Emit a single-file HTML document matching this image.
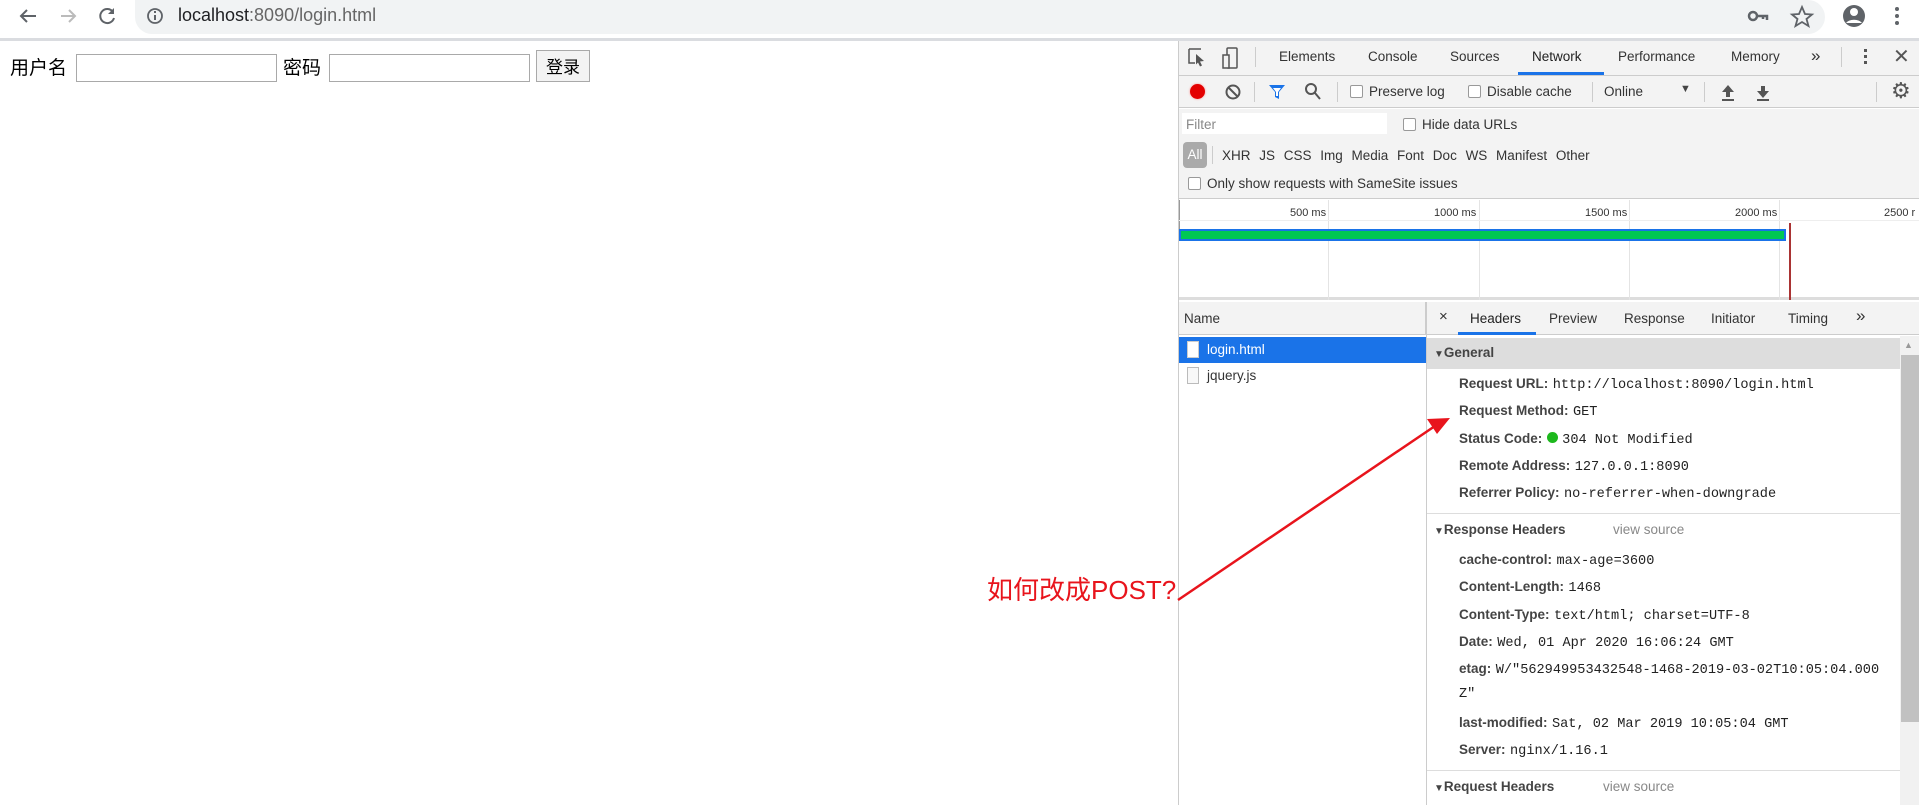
<!DOCTYPE html>
<html><head><meta charset="utf-8"><style>
*{margin:0;padding:0;box-sizing:border-box}
body{width:1919px;height:805px;overflow:hidden;background:#fff;font-family:"Liberation Sans","Noto Sans CJK SC",sans-serif;position:relative;color:#333}
.a{position:absolute;white-space:nowrap}
.dt{font-size:13.5px;color:#333}
.mono{font-family:"Liberation Mono",monospace;font-size:13.6px;color:#222}
.lab{font-weight:bold;color:#444;font-size:13.5px}
.cb{display:inline-block;width:13px;height:13px;border:1px solid #999;border-radius:2px;background:#fff;vertical-align:-2px;margin-right:6px}
</style></head><body>
<div class="a" style="left:0;top:0;width:1919px;height:38px;background:#fff"></div>
<div class="a" style="left:135px;top:0;width:1690px;height:34px;background:#f1f3f4;border-radius:0 17px 17px 17px"></div>
<div class="a" style="left:0;top:38px;width:1919px;height:3px;background:#dadce0"></div>
<svg class="a" style="left:0;top:0" width="400" height="38">
<g fill="none" stroke-width="2">
<path d="M36 16H21M27 10l-6 6 6 6" stroke="#5f6368"/>
<path d="M61 16h14M69 10l6 6-6 6" stroke="#bbb"/>
<path d="M113 12a7 7 0 1 0 1 6" stroke="#5f6368"/>
</g>
<path d="M114 8v6h-6z" fill="#5f6368"/>
<circle cx="155" cy="16" r="7" fill="none" stroke="#5f6368" stroke-width="1.8"/>
<rect x="154" y="15" width="2" height="5" fill="#5f6368"/><rect x="154" y="11" width="2" height="2" fill="#5f6368"/>
</svg>
<div class="a" style="left:178px;top:5px;font-size:18px;color:#202124">localhost<span style="color:#666">:8090/login.html</span></div>
<svg class="a" style="left:1740px;top:4px" width="179" height="28">
<circle cx="13" cy="12" r="4" fill="none" stroke="#5f6368" stroke-width="2.5"/><path d="M17 12h10v4M23 12v3" stroke="#5f6368" stroke-width="2.5" fill="none"/>
<path d="M62 3l3 7 7 .5-5.5 4.5 2 7-6.5-4-6.5 4 2-7-5.5-4.5 7-.5z" fill="none" stroke="#5f6368" stroke-width="1.8"/>
<circle cx="114" cy="12" r="11" fill="#5f6368"/><circle cx="114" cy="8" r="4" fill="#fff"/><path d="M106 19a9 6 0 0 1 16 0" fill="#fff"/>
<circle cx="157" cy="5" r="2" fill="#5f6368"/><circle cx="157" cy="12" r="2" fill="#5f6368"/><circle cx="157" cy="19" r="2" fill="#5f6368"/>
</svg>
<div class="a" style="left:10px;top:54px;font-size:19px;color:#000;font-family:'Noto Sans CJK SC',sans-serif;line-height:26px">用户名</div>
<div class="a" style="left:76px;top:54px;width:201px;height:28px;border:1px solid #a9a9a9"></div>
<div class="a" style="left:283px;top:54px;font-size:19px;color:#000;font-family:'Noto Sans CJK SC',sans-serif;line-height:26px">密码</div>
<div class="a" style="left:329px;top:54px;width:201px;height:28px;border:1px solid #a9a9a9"></div>
<div class="a" style="left:536px;top:50px;width:54px;height:32px;border:1px solid #a9a9a9;background:#f3f3f3;font-size:17px;color:#000;text-align:center;line-height:30px;font-family:'Noto Sans CJK SC',sans-serif">登录</div>
<!-- devtools -->
<div class="a" style="left:1178px;top:41px;width:741px;height:764px;background:#fff;border-left:1px solid #ccc"></div>
<div class="a" style="left:1179px;top:41px;width:740px;height:35px;background:#f3f3f3;border-bottom:1px solid #ccc"></div>
<svg class="a" style="left:1185px;top:46px" width="40" height="26">
<path d="M4 3h12M4 3v14h6" stroke="#555" stroke-width="1.5" fill="none"/><path d="M11 8l8 7-4 .5 2 4-2 1-2-4-2 2z" fill="#555"/>
</svg>
<svg class="a" style="left:1220px;top:46px" width="24" height="26"><rect x="7" y="2" width="10" height="20" rx="1" fill="none" stroke="#555" stroke-width="1.5"/><rect x="3" y="9" width="6" height="13" fill="#f3f3f3" stroke="#555" stroke-width="1.5"/></svg>
<div class="a" style="left:1255px;top:47px;width:1px;height:20px;background:#ccc"></div>
<div class="a dt" style="left:1279px;top:49px">Elements</div>
<div class="a dt" style="left:1368px;top:49px">Console</div>
<div class="a dt" style="left:1450px;top:49px">Sources</div>
<div class="a dt" style="left:1532px;top:49px;color:#222">Network</div>
<div class="a" style="left:1518px;top:72px;width:86px;height:3px;background:#1a73e8"></div>
<div class="a dt" style="left:1618px;top:49px">Performance</div>
<div class="a dt" style="left:1731px;top:49px">Memory</div>
<div class="a dt" style="left:1811px;top:46px;font-size:17px">»</div>
<div class="a" style="left:1841px;top:47px;width:1px;height:20px;background:#ccc"></div>
<div class="a" style="left:1864px;top:49px;width:3px;height:3px;background:#555;box-shadow:0 6px #555,0 12px #555"></div>
<div class="a" style="left:1893px;top:44px;font-size:20px;color:#555">✕</div>
<div class="a" style="left:1179px;top:76px;width:740px;height:32px;background:#f3f3f3;border-bottom:1px solid #ccc"></div>
<div class="a" style="left:1190px;top:84px;width:15px;height:15px;border-radius:50%;background:#e30000;box-shadow:0 0 2px #f88"></div>
<svg class="a" style="left:1224px;top:83px" width="18" height="18"><circle cx="9" cy="9" r="6.5" fill="none" stroke="#555" stroke-width="2"/><line x1="4.5" y1="4.5" x2="13.5" y2="13.5" stroke="#555" stroke-width="2"/></svg>
<div class="a" style="left:1254px;top:82px;width:1px;height:20px;background:#ccc"></div>
<svg class="a" style="left:1268px;top:83px" width="18" height="18"><path d="M1 2h16l-6 7v7l-4-2V9z" fill="#1a73e8"/><path d="M5 5h8l-3 4v4h-2V9z" fill="#fff"/></svg>
<svg class="a" style="left:1304px;top:82px" width="18" height="20"><circle cx="7" cy="7" r="5" fill="none" stroke="#555" stroke-width="2"/><line x1="11" y1="11" x2="16" y2="17" stroke="#555" stroke-width="2"/></svg>
<div class="a" style="left:1337px;top:82px;width:1px;height:20px;background:#ccc"></div>
<div class="a dt" style="left:1350px;top:84px"><span class="cb"></span>Preserve log</div>
<div class="a dt" style="left:1468px;top:84px"><span class="cb"></span>Disable cache</div>
<div class="a" style="left:1592px;top:82px;width:1px;height:20px;background:#ccc"></div>
<div class="a dt" style="left:1604px;top:84px">Online</div>
<div class="a" style="left:1680px;top:83px;font-size:11px;color:#444">▼</div>
<div class="a" style="left:1704px;top:82px;width:1px;height:20px;background:#ccc"></div>
<svg class="a" style="left:1720px;top:82px" width="50" height="20"><path d="M8 3l6 7h-4v5H6v-5H2z M2 17h12v2H2z" fill="#555"/><path d="M43 16l6-7h-4V4h-4v5h-4z M37 17h12v2H37z" fill="#555"/></svg>
<div class="a" style="left:1876px;top:82px;width:1px;height:20px;background:#ccc"></div>
<div class="a" style="left:1891px;top:78px;font-size:22px;color:#555">⚙</div>
<div class="a" style="left:1179px;top:109px;width:740px;height:90px;background:#f3f3f3;border-bottom:1px solid #ccc"></div>
<div class="a" style="left:1182px;top:113px;width:205px;height:21px;background:#fff"></div>
<div class="a dt" style="left:1186px;top:117px;color:#888">Filter</div>
<div class="a dt" style="left:1403px;top:117px"><span class="cb"></span>Hide data URLs</div>
<div class="a" style="left:1183px;top:142px;width:24px;height:26px;border-radius:4px;background:#aaa;color:#fff;font-size:13.5px;text-align:center;line-height:26px">All</div>
<div class="a" style="left:1212px;top:146px;width:1px;height:18px;background:#ccc"></div>
<div class="a dt" style="left:1222px;top:148px;word-spacing:5px">XHR JS CSS Img Media Font Doc WS Manifest Other</div>
<div class="a dt" style="left:1188px;top:176px"><span class="cb"></span>Only show requests with SameSite issues</div>
<div class="a" style="left:1179px;top:200px;width:740px;height:100px;background:#fff;border-bottom:3px solid #ddd"></div>
<div class="a" style="left:1179px;top:200px;width:1px;height:30px;background:#999"></div>
<div class="a" style="left:1328px;top:200px;width:1px;height:100px;background:#e4e4e4"></div>
<div class="a" style="left:1479px;top:200px;width:1px;height:100px;background:#e4e4e4"></div>
<div class="a" style="left:1629px;top:200px;width:1px;height:100px;background:#e4e4e4"></div>
<div class="a" style="left:1779px;top:200px;width:1px;height:100px;background:#e4e4e4"></div>
<div class="a" style="left:1179px;top:220px;width:740px;height:1px;background:#eee"></div>
<div class="a" style="left:1290px;top:207px;font-size:11px;color:#333">500 ms</div>
<div class="a" style="left:1434px;top:207px;font-size:11px;color:#333">1000 ms</div>
<div class="a" style="left:1585px;top:207px;font-size:11px;color:#333">1500 ms</div>
<div class="a" style="left:1735px;top:207px;font-size:11px;color:#333">2000 ms</div>
<div class="a" style="left:1884px;top:207px;font-size:11px;color:#333">2500 r</div>
<div class="a" style="left:1179px;top:229px;width:607px;height:12px;background:#00c853;border:2px solid #1a73e8"></div>
<div class="a" style="left:1789px;top:223px;width:2px;height:77px;background:#a33"></div>
<div class="a" style="left:1179px;top:302px;width:247px;height:33px;background:#f3f3f3;border-bottom:1px solid #ccc;border-right:1px solid #ccc"></div>
<div class="a dt" style="left:1184px;top:311px">Name</div>
<div class="a" style="left:1426px;top:302px;width:1px;height:503px;background:#ccc"></div>
<div class="a" style="left:1179px;top:337px;width:247px;height:26px;background:#1a73e8"></div>
<div class="a" style="left:1187px;top:341px;width:12px;height:17px;background:#fff;border:1px solid #ccc"></div>
<div class="a dt" style="left:1207px;top:342px;color:#fff">login.html</div>
<div class="a" style="left:1187px;top:367px;width:12px;height:17px;background:#f8f8f8;border:1px solid #bbb"></div>
<div class="a dt" style="left:1207px;top:368px">jquery.js</div>
<div class="a" style="left:1427px;top:302px;width:492px;height:33px;background:#f3f3f3;border-bottom:1px solid #ccc"></div>
<div class="a dt" style="left:1439px;top:308px;font-size:15px">×</div>
<div class="a dt" style="left:1470px;top:311px;color:#222">Headers</div>
<div class="a" style="left:1458px;top:332px;width:78px;height:3px;background:#1a73e8"></div>
<div class="a dt" style="left:1549px;top:311px">Preview</div>
<div class="a dt" style="left:1624px;top:311px">Response</div>
<div class="a dt" style="left:1711px;top:311px">Initiator</div>
<div class="a dt" style="left:1788px;top:311px">Timing</div>
<div class="a dt" style="left:1856px;top:306px;font-size:17px">»</div>
<div class="a" style="left:1427px;top:338px;width:473px;height:31px;background:#ddd"></div>
<div class="a lab" style="left:1434px;top:345px"><span style="font-size:10px">▼</span>General</div>
<div class="a" style="left:1900px;top:336px;width:19px;height:469px;background:#f1f1f1"></div>
<div class="a" style="left:1901px;top:355px;width:18px;height:367px;background:#c1c1c1"></div>
<div class="a" style="left:1904px;top:340px;font-size:9px;color:#999">▲</div>
<div class="a" style="left:1459px;top:375px"><span class="lab">Request URL:</span> <span class="mono">http://localhost:8090/login.html</span></div>
<div class="a" style="left:1459px;top:402px"><span class="lab">Request Method:</span> <span class="mono">GET</span></div>
<div class="a" style="left:1459px;top:430px"><span class="lab">Status Code:</span> <span style="display:inline-block;width:11px;height:11px;border-radius:50%;background:#1db81d"></span> <span class="mono">304 Not Modified</span></div>
<div class="a" style="left:1459px;top:457px"><span class="lab">Remote Address:</span> <span class="mono">127.0.0.1:8090</span></div>
<div class="a" style="left:1459px;top:484px"><span class="lab">Referrer Policy:</span> <span class="mono">no-referrer-when-downgrade</span></div>
<div class="a" style="left:1427px;top:513px;width:473px;height:1px;background:#ddd"></div>
<div class="a lab" style="left:1434px;top:522px"><span style="font-size:10px">▼</span>Response Headers</div>
<div class="a dt" style="left:1613px;top:522px;color:#888">view source</div>
<div class="a" style="left:1459px;top:551px"><span class="lab">cache-control:</span> <span class="mono">max-age=3600</span></div>
<div class="a" style="left:1459px;top:578px"><span class="lab">Content-Length:</span> <span class="mono">1468</span></div>
<div class="a" style="left:1459px;top:606px"><span class="lab">Content-Type:</span> <span class="mono">text/html; charset=UTF-8</span></div>
<div class="a" style="left:1459px;top:633px"><span class="lab">Date:</span> <span class="mono">Wed, 01 Apr 2020 16:06:24 GMT</span></div>
<div class="a" style="left:1459px;top:660px"><span class="lab">etag:</span> <span class="mono">W/"562949953432548-1468-2019-03-02T10:05:04.000</span></div>
<div class="a mono" style="left:1459px;top:687px">Z"</div>
<div class="a" style="left:1459px;top:714px"><span class="lab">last-modified:</span> <span class="mono">Sat, 02 Mar 2019 10:05:04 GMT</span></div>
<div class="a" style="left:1459px;top:741px"><span class="lab">Server:</span> <span class="mono">nginx/1.16.1</span></div>
<div class="a" style="left:1427px;top:770px;width:473px;height:1px;background:#ddd"></div>
<div class="a lab" style="left:1434px;top:779px"><span style="font-size:10px">▼</span>Request Headers</div>
<div class="a dt" style="left:1603px;top:779px;color:#888">view source</div>
<!-- annotation on top -->
<div class="a" style="left:987px;top:570px;font-size:26px;color:#e8141c;font-family:'Liberation Sans','Noto Sans CJK SC',sans-serif;z-index:6">如何改成POST?</div>
<svg class="a" style="left:0;top:0;pointer-events:none;z-index:5" width="1919" height="805">
<line x1="1178" y1="600" x2="1435" y2="426" stroke="#e8141c" stroke-width="2.5"/>
<path d="M1450 418l-23 1 10 15z" fill="#e8141c"/>
</svg>
</body></html>
